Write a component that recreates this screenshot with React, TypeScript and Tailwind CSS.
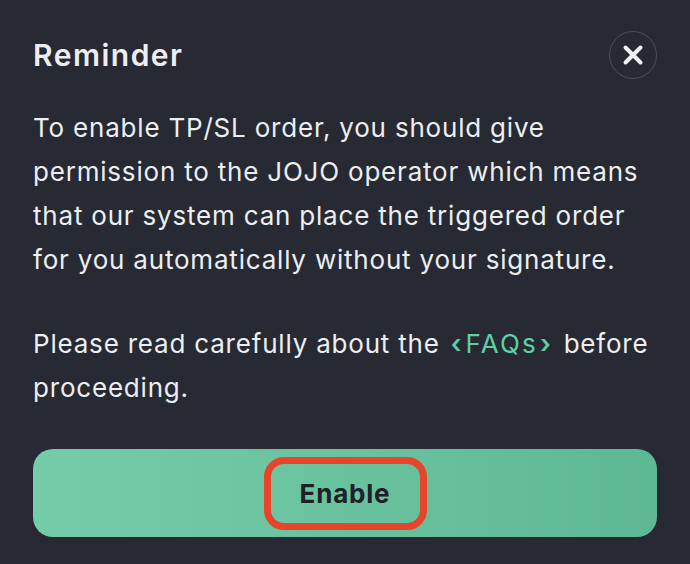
export default function App() {
  return (
    <div
      className="w-[690px] h-[564px] bg-[#272a33] text-[#eceef1] px-[33px] pt-[31px] flex flex-col"
      style={{ fontFamily: 'Inter, "Noto Sans", sans-serif' }}
    >
      <div className="flex items-center justify-between">
        <h2 className="text-[30px] font-semibold leading-[48px] tracking-[1.5px]">Reminder</h2>
        <button className="w-[48px] h-[48px] rounded-full border-[1.5px] border-[#4b4e58] flex items-center justify-center">
          <svg width="22" height="22" viewBox="0 0 22 22" fill="none">
            <path d="M3.5 3.5L18.5 18.5M18.5 3.5L3.5 18.5" stroke="#eef0f3" strokeWidth="4" strokeLinecap="round" />
          </svg>
        </button>
      </div>

      <p className="mt-[27px] text-[26px] leading-[44px] tracking-[0.8px]">
        To enable TP/SL order, you should give permission to the JOJO operator which means that our
        system can place the triggered order for you automatically without your signature.
      </p>
      <p className="mt-[40px] text-[26px] leading-[44px] tracking-[0.8px]">
        Please read carefully about the{' '}
        <span className="text-[#5fd0a3] ml-[3px] mr-[4px]">
          <span className="mr-[3px] font-semibold">‹</span>
          <span className="tracking-[2.2px]">FAQs</span>
          <span className="ml-[2px] font-semibold">›</span>
        </span>{' '}
        before proceeding.
      </p>

      <div className="mt-[39px] h-[88px] rounded-[20px] bg-gradient-to-r from-[#74cca9] to-[#5fb894] flex items-center justify-center">
        <div className="w-[163px] h-[73px] rounded-[20px] border-[7px] border-[#e8432b] flex items-center justify-center">
          <span className="text-[26px] font-bold tracking-[0.8px] text-[#1e2128]">Enable</span>
        </div>
      </div>
    </div>
  );
}
